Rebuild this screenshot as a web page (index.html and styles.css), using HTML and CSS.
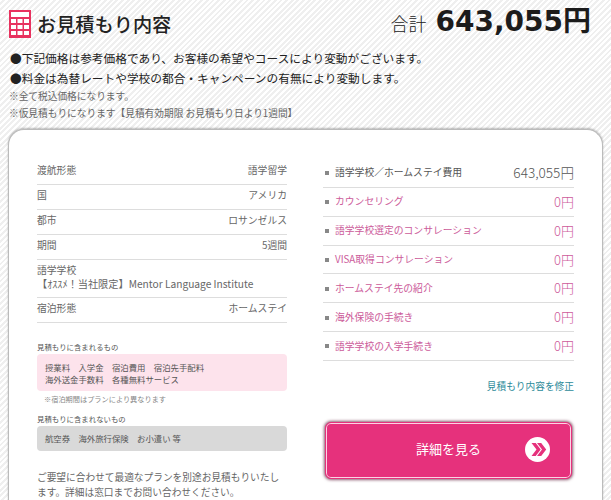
FILE: index.html
```html
<!DOCTYPE html>
<html lang="ja">
<head>
<meta charset="utf-8">
<title>お見積もり内容</title>
<link rel="stylesheet" href="styles.css">
</head>
<body>
<header class="head">
  <h1 class="title">
    <svg class="calc" width="22" height="28" viewBox="0 0 22 28" aria-hidden="true">
      <rect width="22" height="28" fill="#e8325f"/>
      <rect x="2" y="2" width="18" height="5" fill="#fff"/>
      <g fill="#fff">
        <rect x="2" y="9" width="5" height="4"/><rect x="8.5" y="9" width="5" height="4"/><rect x="15" y="9" width="5" height="4"/>
        <rect x="2" y="15" width="5" height="4"/><rect x="8.5" y="15" width="5" height="4"/><rect x="15" y="15" width="5" height="4"/>
        <rect x="2" y="21" width="5" height="4"/><rect x="8.5" y="21" width="5" height="4"/><rect x="15" y="21" width="5" height="4"/>
      </g>
    </svg>
    <span class="title-text">お見積もり内容</span>
  </h1>
  <p class="total"><span class="total-label">合計</span> <strong class="total-num">643,055円</strong></p>
</header>
<ul class="notes">
  <li>●下記価格は参考価格であり、お客様の希望やコースにより変動がございます。</li>
  <li>●料金は為替レートや学校の都合・キャンペーンの有無により変動します。</li>
</ul>
<p class="sub">※全て税込価格になります。</p>
<p class="sub">※仮見積もりになります【見積有効期限 お見積もり日より1週間】</p>
<main class="card">
  <section class="left">
    <dl class="spec">
      <div class="spec-row"><dt>渡航形態</dt><dd>語学留学</dd></div>
      <div class="spec-row"><dt>国</dt><dd>アメリカ</dd></div>
      <div class="spec-row"><dt>都市</dt><dd>ロサンゼルス</dd></div>
      <div class="spec-row"><dt>期間</dt><dd>5週間</dd></div>
      <div class="spec-row stack"><dt>語学学校</dt><dd>【ｵｽｽﾒ！当社限定】Mentor Language Institute</dd></div>
      <div class="spec-row"><dt>宿泊形態</dt><dd>ホームステイ</dd></div>
    </dl>
    <p class="cap first">見積もりに含まれるもの</p>
    <p class="box pink">授業料　入学金　宿泊費用　宿泊先手配料<br>海外送金手数料　各種無料サービス</p>
    <p class="mini">※宿泊期間はプランにより異なります</p>
    <p class="cap second">見積もりに含まれないもの</p>
    <p class="box gray">航空券　海外旅行保険　お小遣い 等</p>
    <p class="lead">ご要望に合わせて最適なプランを別途お見積もりいたします。詳細は窓口までお問い合わせください。</p>
  </section>
  <section class="right">
    <ul class="fees">
      <li class="fee dark"><span class="fee-name">語学学校／ホームステイ費用</span><span class="fee-val">643,055円</span></li>
      <li class="fee"><span class="fee-name">カウンセリング</span><span class="fee-val">0円</span></li>
      <li class="fee"><span class="fee-name">語学学校選定のコンサレーション</span><span class="fee-val">0円</span></li>
      <li class="fee"><span class="fee-name">VISA取得コンサレーション</span><span class="fee-val">0円</span></li>
      <li class="fee"><span class="fee-name">ホームステイ先の紹介</span><span class="fee-val">0円</span></li>
      <li class="fee"><span class="fee-name">海外保険の手続き</span><span class="fee-val">0円</span></li>
      <li class="fee"><span class="fee-name">語学学校の入学手続き</span><span class="fee-val">0円</span></li>
    </ul>
    <a class="modify" href="#">見積もり内容を修正</a>
    <a class="cta" href="#">
      <span class="cta-text">詳細を見る</span>
      <svg class="cta-icon" width="25" height="25" viewBox="0 0 25 25" aria-hidden="true">
        <circle cx="12.5" cy="12.5" r="12.5" fill="#fff"/>
        <path d="M6.5 6h4.2l5 6.5-5 6.5H6.500l5-6.500z M12 6h4.200l5 6.500-5 6.500H12l5-6.500z" fill="#e6317c"/>
      </svg>
    </a>
  </section>
</main>
</body>
</html>
```
FILE: styles.css
```css
* { box-sizing: border-box; }
html, body { margin: 0; padding: 0; }
body {
  width: 611px;
  height: 500px;
  overflow: hidden;
  font-family: "Noto Sans CJK JP", "Open Sans", sans-serif;
  color: #333;
  background: repeating-linear-gradient(135deg, #fff 0, #fff 2px, #efefef 2px, #efefef 4px);
}
ul, dl, dd, p, h1 { margin: 0; padding: 0; }
ul { list-style: none; }
a { text-decoration: none; }

.head {
  display: flex;
  justify-content: space-between;
  align-items: center;
  height: 44px;
  padding: 4px 20px 0 9px;
}
.title {
  display: flex;
  align-items: center;
  gap: 6px;
  font-size: 19.2px;
  font-weight: 500;
  color: #222;
  line-height: 1;
}
.title-text { padding-top: 2px; }
.calc { flex: none; }
.total { display: flex; align-items: baseline; gap: 9px; color: #222; line-height: 1; margin-bottom: 4px; }
.total-label { font-size: 18px; font-weight: 300; }
.total-num {
  font-family: "DejaVu Sans", "Noto Sans CJK JP", sans-serif;
  font-size: 28px;
  font-weight: 700;
  color: #1c1c1c;
}

.notes { padding: 4px 0 0 10px; font-size: 11.7px; line-height: 19.5px; color: #222; }
.sub { padding-left: 9px; margin-top: 1px; font-size: 9.7px; line-height: 16px; color: #666; }

.card {
  display: flex;
  gap: 36px;
  width: 595px;
  height: 371px;
  margin: 8px 0 0 8px;
  padding: 27px 28px 0;
  background: #fff;
  border: 1px solid #bbb;
  border-bottom: 0;
  border-radius: 16px 16px 0 0;
  box-shadow: 0 -1px 2px rgba(0,0,0,.25);
}
.left { width: 250px; flex: none; }
.right { width: 251px; flex: none; }

.spec { font-size: 9.8px; color: #666; }
.spec-row {
  display: flex;
  justify-content: space-between;
  align-items: center;
  height: 25px;
  padding-bottom: 4px;
  border-bottom: 1px solid #ddd;
}
.spec-row:first-child { height: 28px; padding-bottom: 1px; }
.spec-row.stack { display: block; height: 38px; padding: 3px 0 0; line-height: 14px; }
.spec-row.stack dd { font-size: 10.2px; }

.cap { font-size: 7.4px; line-height: 12px; color: #555; }
.cap.first { margin-top: 18px; }
.cap.second { margin-top: 8px; }
.box { border-radius: 4px; margin-top: 1px; padding: 7px 8px; font-size: 8.4px; line-height: 12px; color: #555; }
.pink { background: #fde3ec; height: 37px; }
.gray { background: #d9d9d9; height: 25px; padding-top: 6px; }
.mini { font-size: 7.2px; line-height: 12px; color: #888; margin: 2px 0 0 7px; }
.lead { margin-top: 19px; font-size: 9.7px; line-height: 15px; color: #666; }

.fee {
  display: flex;
  justify-content: space-between;
  align-items: center;
  height: 28.83px;
  padding-bottom: 1px;
  border-bottom: 1px solid #ddd;
  color: #cc5b9a;
}
.fee.dark { color: #555; height: 31px; padding-bottom: 0; }
.fee-name { font-size: 9.8px; }
.fee-name::before {
  content: "";
  display: inline-block;
  width: 4px;
  height: 4px;
  margin: 0 6px 1px 2px;
  background: #888;
  vertical-align: middle;
}
.fee-val { font-size: 13px; font-weight: 300; }
.fee.dark .fee-val { font-size: 13.6px; }
.modify { display: block; margin-top: 17px; text-align: right; font-size: 9.7px; line-height: 16px; color: #2e8b9a; }
.cta {
  position: relative;
  display: flex;
  align-items: center;
  justify-content: center;
  height: 57px;
  margin: 28px 2px 0;
  padding-bottom: 3px;
  background: #e6317c;
  border: 1px solid #e6317c;
  border-radius: 6px;
  box-shadow: 0 0 3px 1px rgba(90,20,50,.7), inset 0 0 0 1px #fbd3e4;
}
.cta-text { font-size: 13px; color: #fff; }
.cta-icon { position: absolute; right: 21px; top: 14px; }
```
